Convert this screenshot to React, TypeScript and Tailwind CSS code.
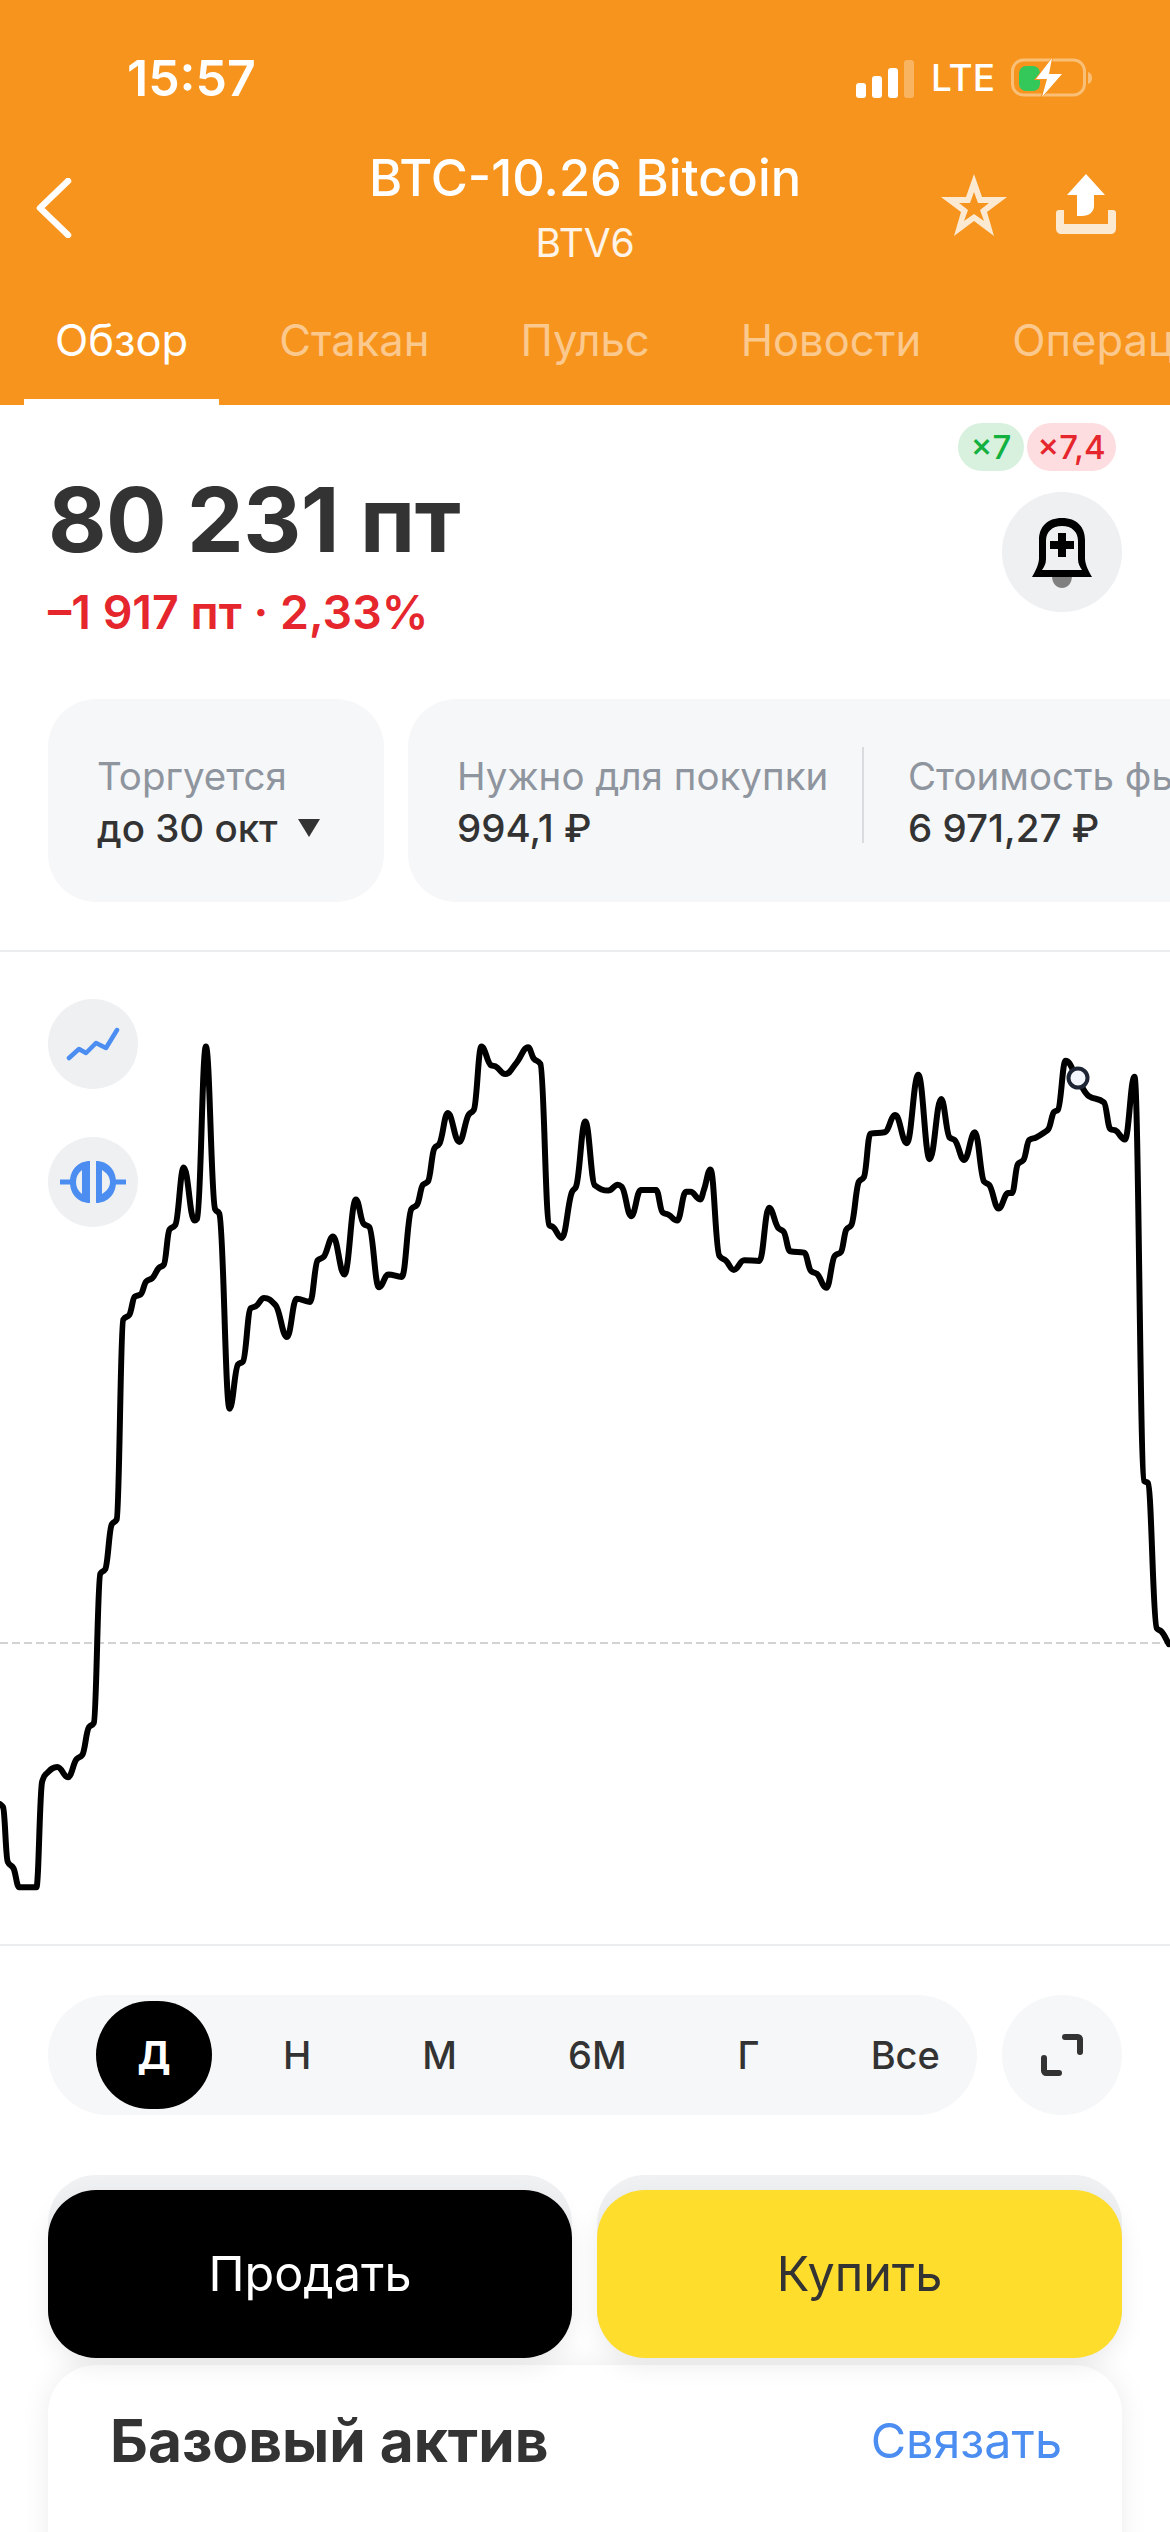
// chart traced from the screenshot, [x, y] in page pixels
const raw: number[][] = [
  [0,1335],[8,1340],[20,1425],[35,1435],[50,1465],[95,1465],[110,1300],[120,1288],[150,1277],[178,1293],[200,1265],[215,1258],[232,1215],[245,1208],[262,975],[275,968],[292,898],[305,890],[322,578],[338,570],[352,542],[368,538],[382,518],[398,513],[415,497],[428,492],[443,437],[458,430],[480,340],[508,423],[515,420],[538,151],[562,405],[573,412],[600,717],[622,648],[635,643],[655,560],[668,557],[690,544],[720,555],[750,605],[775,545],[810,550],[830,485],[845,480],[870,448],[900,507],[930,390],[950,428],[965,433],[990,527],[1015,507],[1050,511],[1075,405],[1090,398],[1105,367],[1118,362],[1135,310],[1148,303],[1170,255],[1200,300],[1225,257],[1238,250],[1258,151],[1283,180],[1295,182],[1320,194],[1350,176],[1380,152],[1395,170],[1412,178],[1435,430],[1445,433],[1468,450],[1495,378],[1505,370],
];
const raw2: number[][] = [
  [40,268],[65,368],[100,376],[125,367],[135,370],[160,416],[185,375],[225,375],[242,410],[258,414],[280,423],[303,378],[315,378],[340,390],[350,375],[367,343],[390,478],[408,486],[428,500],[455,485],[495,486],[520,403],[545,435],[558,440],[575,471],[612,473],[630,502],[645,506],[670,528],[692,478],[708,472],[722,437],[735,430],[755,362],[768,355],[785,287],[822,285],[850,258],[880,302],[910,195],[940,327],[970,233],[992,293],[1005,297],[1030,328],[1058,285],[1082,362],[1095,367],[1120,404],[1145,380],[1155,380],[1170,335],[1185,328],[1200,297],[1218,293],[1240,285],[1250,280],[1265,253],[1275,250],[1295,173],[1325,200],[1355,228],[1395,238],[1412,280],[1425,282],[1450,296],[1475,198],[1500,830],[1510,833],[1533,1060],[1545,1065],[1565,1085],
];

const CHART_TOP = 952;
const points = [
  ...raw.map(([x, y]) => [x / 2.613, 950 + y / 1.563 - CHART_TOP]),
  ...raw2.map(([x, y]) => [570 + x / 2.613, 950 + y / 1.563 - CHART_TOP]),
];

// monotone cubic, so peaks stay at the traced height
function smooth(pts: number[][]) {
  const n = pts.length;
  const slope: number[] = [];
  for (let i = 0; i < n - 1; i++) slope.push((pts[i + 1][1] - pts[i][1]) / (pts[i + 1][0] - pts[i][0]));
  const m: number[] = [slope[0]];
  for (let i = 1; i < n - 1; i++) {
    const a = slope[i - 1];
    const b = slope[i];
    m.push(a * b <= 0 ? 0 : (2 * a * b) / (a + b));
  }
  m.push(slope[n - 2]);
  let d = `M${pts[0][0].toFixed(1)} ${pts[0][1].toFixed(1)}`;
  for (let i = 0; i < n - 1; i++) {
    const h = (pts[i + 1][0] - pts[i][0]) / 2.4;
    d += ` C${(pts[i][0] + h).toFixed(1)} ${(pts[i][1] + m[i] * h).toFixed(1)} ${(pts[i + 1][0] - h).toFixed(1)} ${(pts[i + 1][1] - m[i + 1] * h).toFixed(1)} ${pts[i + 1][0].toFixed(1)} ${pts[i + 1][1].toFixed(1)}`;
  }
  return d;
}

const tabs = ['Обзор', 'Стакан', 'Пульс', 'Новости', 'Операции'];
const periods = ['Д', 'Н', 'М', '6М', 'Г', 'Все'];

function StatusIcons() {
  return (
    <div className="flex items-center">
      <svg width="60" height="40" viewBox="0 0 60 40" className="mr-[15px]">
        <rect x="0" y="25" width="10" height="15" rx="3" fill="#fff" />
        <rect x="16" y="18" width="10" height="22" rx="3" fill="#fff" />
        <rect x="32" y="10" width="10" height="30" rx="3" fill="#fff" />
        <rect x="48" y="2" width="10" height="38" rx="3" fill="#fff" fillOpacity="0.3" />
      </svg>
      <span className="text-[37px] leading-[44px] font-medium text-white mr-[16px]">LTE</span>
      <svg width="84" height="44" viewBox="0 0 84 44">
        <rect x="1.5" y="4" width="72" height="35" rx="11" fill="none" stroke="#fff" strokeOpacity="0.4" strokeWidth="3" />
        <rect x="8" y="10" width="21" height="25" rx="7" fill="#34C759" />
        <path d="M42 0 L23 24 H34 L29 44 L53 17 H40 Z" fill="#F7941D" />
        <path d="M41 2 L25 23 H36 L31 41 L51 18 H38 Z" fill="#fff" />
        <path d="M77 16c3 1 4 3 4 6s-1 5-4 6z" fill="#fff" fillOpacity="0.4" />
      </svg>
    </div>
  );
}

function BackIcon() {
  return (
    <svg width="36" height="60" viewBox="0 0 36 60" fill="none">
      <path d="M32 3 L4 30 L32 57" stroke="#fff" strokeWidth="6.5" strokeLinecap="round" strokeLinejoin="round" />
    </svg>
  );
}

function StarIcon() {
  return (
    <svg width="66" height="62" viewBox="0 0 66 62">
      <path
        fillRule="evenodd"
        d="M33 0 L41 23 L66 23 L46 38 L53 62 L33 47 L13 62 L20 38 L0 23 L25 23 Z M33 18 L29 29 L18 29 L27 36 L23 47 L33 40 L43 47 L39 36 L48 29 L37 29 Z"
        fill="#FCE9D2"
      />
    </svg>
  );
}

function ShareIcon() {
  return (
    <svg width="60" height="60" viewBox="0 0 60 60">
      <path d="M30 0 L49 21 L38 21 L38 32 C38 38 33 42 26 42 L21 42 L21 21 L11 21 Z" fill="#fff" />
      <path d="M0 39 C0 37 1 36 3 36 L8 36 L8 50 L52 50 L52 36 L57 36 C59 36 60 37 60 39 L60 54 C60 58 58 60 54 60 L6 60 C2 60 0 58 0 54 Z" fill="#FCE9D2" />
    </svg>
  );
}

function BellIcon() {
  return (
    <svg width="60" height="72" viewBox="0 0 60 72">
      <path d="M20 58 H40 C40 66 35 70 30 70 C25 70 20 66 20 58 Z" fill="#808080" />
      <path
        fillRule="evenodd"
        d="M30 0 C15 0 7 9 7 22 V40 C7 46 4 52 0 59 H60 C56 52 53 46 53 40 V22 C53 9 45 0 30 0 Z M30 8 C40 8 46 14 46 23 V41 C46 46 48 49 50 52 H10 C12 49 14 46 14 41 V23 C14 14 20 8 30 8 Z"
        fill="#000"
      />
      <path d="M26 15 H34 V23 H42 V31 H34 V39 H26 V31 H18 V23 H26 Z" fill="#000" />
    </svg>
  );
}

function LineChartIcon() {
  return (
    <svg width="54" height="36" viewBox="0 0 54 36" fill="none">
      <path d="M3 32 L13 23 L20 27 L30 17 L40 22 L51 4" stroke="#4B8DF0" strokeWidth="4.5" strokeLinecap="round" strokeLinejoin="round" />
    </svg>
  );
}

function CompareIcon() {
  return (
    <svg width="66" height="42" viewBox="0 0 66 42" fill="none">
      <path d="M0 19 H13 V23 H0 Z M53 19 H66 V23 H53 Z" fill="#4B8DF0" stroke="#4B8DF0" strokeWidth="1" />
      <path fillRule="evenodd" d="M30 0 V42 C18 42 10 33 10 21 C10 9 18 0 30 0 Z M22 9 C18 12 16 16 16 21 C16 26 18 30 22 33 Z" fill="#4B8DF0" />
      <path fillRule="evenodd" d="M36 0 V42 C48 42 56 33 56 21 C56 9 48 0 36 0 Z M42 9 V33 C47 30 50 26 50 21 C50 16 47 12 42 9 Z" fill="#4B8DF0" />
    </svg>
  );
}

function ExpandIcon() {
  return (
    <svg width="44" height="44" viewBox="0 0 44 44" fill="none">
      <path d="M25 4 H38 C39 4 40 5 40 6 V19" stroke="#333" strokeWidth="6" strokeLinecap="round" />
      <path d="M4 25 V38 C4 39 5 40 6 40 H19" stroke="#333" strokeWidth="6" strokeLinecap="round" />
    </svg>
  );
}

export default function App() {
  return (
    <div className="relative w-[1170px] h-[2532px] overflow-hidden bg-white font-['Inter','Noto_Sans',sans-serif] text-[#333333]">
      {/* header */}
      <div className="h-[405px] bg-[#F7941D] flex flex-col">
        <div className="flex items-center justify-between mt-[50px] h-[56px] pl-[127px] pr-[75px]">
          <span className="text-[50px] leading-[56px] font-semibold text-white">15:57</span>
          <StatusIcons />
        </div>

        <div className="flex items-start mt-[44px] h-[111px]">
          <div className="w-[240px] pl-[36px] pt-[28px]">
            <BackIcon />
          </div>
          <div className="flex-1 flex flex-col items-center">
            <span className="text-[50.6px] leading-[56px] font-medium text-white whitespace-nowrap">BTC-10.26 Bitcoin</span>
            <span className="text-[39px] leading-[48px] mt-[13px] text-white/90">BTV6</span>
          </div>
          <div className="w-[240px] flex justify-end gap-[49px] pr-[54px] pt-[24px]">
            <StarIcon />
            <ShareIcon />
          </div>
        </div>

        <div className="flex mt-[44px] pl-[24px] gap-[29px] h-[100px] whitespace-nowrap overflow-hidden">
          {tabs.map((t, i) => (
            <div key={t} className={i === 0 ? 'h-full px-[31px] pt-[9px] border-b-[6px] border-white text-white text-[43.5px] leading-[52px]' : 'h-full px-[31px] pt-[9px] text-white/50 text-[43.5px] leading-[52px]'}>
              {t}
            </div>
          ))}
        </div>
      </div>

      {/* price */}
      <div className="h-[294px] flex justify-between pl-[48px] pr-[48px]">
        <div className="pt-[65px]">
          <div className="text-[90px] leading-[100px] font-bold tracking-[-0.5px]">80 231 пт</div>
          <div className="mt-[14px] text-[46.5px] leading-[56px] font-semibold text-[#E5262C]">–1 917 пт · 2,33%</div>
        </div>
        <div className="pt-[18px] flex flex-col items-end">
          <div className="flex gap-[3px] mr-[6px]">
            <span className="h-[48px] w-[66px] rounded-[24px] bg-[#D8F1DE] text-[#12B03E] text-[33px] leading-[48px] font-medium text-center">×7</span>
            <span className="h-[48px] w-[89px] rounded-[24px] bg-[#FDDDDF] text-[#E5262C] text-[33px] leading-[48px] font-medium text-center">×7,4</span>
          </div>
          <div className="mt-[21px] w-[120px] h-[120px] rounded-full bg-[#EEF0F2] flex items-center justify-center pt-[4px]">
            <BellIcon />
          </div>
        </div>
      </div>

      {/* stats */}
      <div className="flex gap-[24px] pl-[48px] h-[203px] overflow-hidden whitespace-nowrap">
        <div className="w-[336px] shrink-0 rounded-[48px] bg-[#F6F7F8] pl-[49px] pt-[53px]">
          <div className="text-[38.5px] leading-[48px] text-[#8F959E]">Торгуется</div>
          <div className="mt-[4px] flex items-center text-[38.5px] leading-[48px] font-medium">
            до 30 окт
            <svg width="22" height="18" viewBox="0 0 22 18" className="ml-[20px]"><path d="M0 0 H22 L11 18 Z" fill="#333" /></svg>
          </div>
        </div>
        <div className="shrink-0 rounded-[48px] bg-[#F6F7F8] pl-[49px] pt-[53px] w-[1000px] flex">
          <div className="w-[407px] shrink-0 border-r-[2px] border-[#D9DBDF] h-[96px] -mt-[5px] pt-[5px]">
            <div className="text-[38.5px] leading-[48px] text-[#8F959E]">Нужно для покупки</div>
            <div className="mt-[4px] text-[38.5px] leading-[48px] font-medium">994,1 ₽</div>
          </div>
          <div className="pl-[44px]">
            <div className="text-[38.5px] leading-[48px] text-[#8F959E]">Стоимость фьючерса</div>
            <div className="mt-[4px] text-[38.5px] leading-[48px] font-medium">6 971,27 ₽</div>
          </div>
        </div>
      </div>

      {/* chart */}
      <div className="relative mt-[48px] h-[996px] border-y-[2px] border-[#EBECEE]">
        <svg width="1170" height="992" viewBox="0 0 1170 992" fill="none">
          <line x1="0" y1="691" x2="1170" y2="691" stroke="#D2D2D2" strokeWidth="2" strokeDasharray="8 4" />
          <path d={smooth(points)} stroke="#000" strokeWidth="6" strokeLinejoin="round" strokeLinecap="round" />
          <circle cx="1078" cy="126" r="9.5" fill="#F2F5FC" stroke="#1D2433" strokeWidth="4" />
        </svg>
        <div className="absolute left-[48px] top-[47px] flex flex-col gap-[48px]">
          <div className="w-[90px] h-[90px] rounded-full bg-[#EEF0F2] flex items-center justify-center">
            <LineChartIcon />
          </div>
          <div className="w-[90px] h-[90px] rounded-full bg-[#EEF0F2] flex items-center justify-center">
            <CompareIcon />
          </div>
        </div>
      </div>

      {/* periods */}
      <div className="flex justify-between px-[48px] mt-[49px]">
        <div className="w-[929px] h-[120px] rounded-[60px] bg-[#F6F7F8] flex items-center pl-[48px] gap-[111px]">
          {periods.map((p, i) => (
            <div key={p} className={i === 0 ? 'w-[116px] h-[108px] -mr-[40px] rounded-full bg-black text-white font-bold text-[38px] flex items-center justify-center' : 'h-[108px] flex items-center justify-center text-[38px] font-medium text-[#333333]'}>
              {p}
            </div>
          ))}
        </div>
        <div className="w-[120px] h-[120px] rounded-full bg-[#F6F7F8] flex items-center justify-center">
          <ExpandIcon />
        </div>
      </div>

      {/* buttons */}
      <div className="flex justify-between px-[48px] mt-[60px]">
        <div className="w-[524px] pt-[15px] rounded-[48px] bg-[#F0F1F2]">
          <div className="h-[168px] rounded-[48px] bg-black text-white text-[48.5px] flex items-center justify-center shadow-[0_8px_24px_rgba(0,0,0,0.08)]">Продать</div>
        </div>
        <div className="w-[525px] pt-[15px] rounded-[48px] bg-[#F0F1F2]">
          <div className="h-[168px] rounded-[48px] bg-[#FFDD2D] text-[#333333] text-[48.5px] flex items-center justify-center shadow-[0_8px_24px_rgba(0,0,0,0.08)]">Купить</div>
        </div>
      </div>

      {/* card under the buttons */}
      <div className="mx-[48px] mt-[7px] h-[400px] rounded-t-[48px] bg-white shadow-[0_0_28px_rgba(0,0,0,0.08)] flex justify-between items-start pl-[62px] pr-[60px] pt-[43px]">
        <span className="text-[58.6px] leading-[66px] font-bold">Базовый актив</span>
        <span className="text-[48.5px] leading-[66px] text-[#4B8DF0]">Связать</span>
      </div>
    </div>
  );
}
